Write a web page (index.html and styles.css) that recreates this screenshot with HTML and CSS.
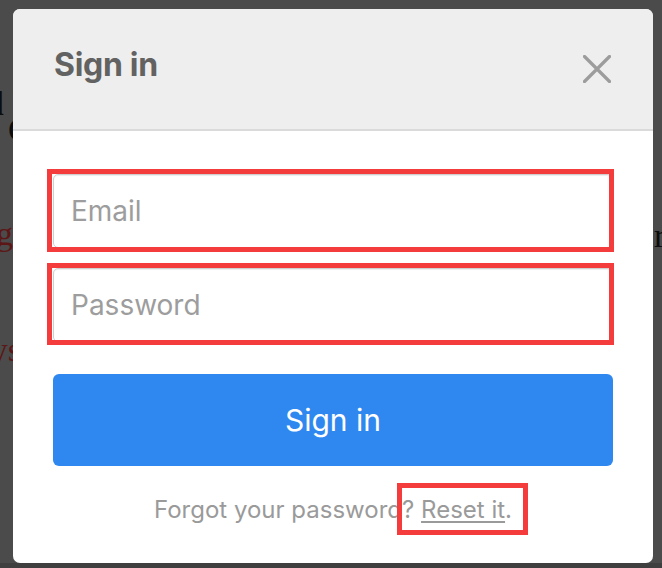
FILE: index.html
```html
<!DOCTYPE html>
<html lang="en">
<head>
<meta charset="utf-8">
<title>Sign in</title>
<link rel="stylesheet" href="styles.css">
</head>
<body>
<div class="page">
  <div class="side side-left">
    <span class="bg-glyph bg-stem">l</span>
    <span class="bg-glyph bg-c">C</span>
    <span class="bg-glyph bg-g">g</span>
    <span class="bg-glyph bg-ys">ys</span>
  </div>
  <div class="modal">
    <div class="modal-header">
      <h2 class="modal-title">Sign in</h2>
      <button class="close" type="button" aria-label="Close">
        <svg width="28" height="28" viewBox="0 0 28 28"><path d="M1.5 1.5 L26.5 26.5 M26.5 1.5 L1.5 26.5" stroke="#9c9c9c" stroke-width="3.2" stroke-linecap="round" fill="none"/></svg>
      </button>
    </div>
    <div class="modal-body">
      <div class="field"><input class="input" type="email" placeholder="Email"><span class="mark"></span></div>
      <div class="field"><input class="input" type="password" placeholder="Password"><span class="mark mark-pw"></span></div>
      <button class="btn" type="button">Sign in</button>
      <p class="forgot">Forgot your password? <span class="reset-wrap"><a class="reset" href="#">Reset it</a>.<span class="mark mark-link"></span></span></p>
    </div>
  </div>
  <div class="side side-right">
    <span class="bg-glyph bg-r">r</span>
  </div>
</div>
</body>
</html>
```

FILE: styles.css
```css
* { box-sizing: border-box; }
html, body { margin: 0; padding: 0; }
body {
  width: 662px;
  height: 568px;
  overflow: hidden;
  background: linear-gradient(#4b4b4b 0, #4b4b4b 563px, #3f3f3f 563px);
  font-family: Inter, "Liberation Sans", Arial, sans-serif;
}
.page {
  display: grid;
  grid-template-columns: 13px 640px 9px;
  padding-top: 9px;
  height: 568px;
}
.side {
  overflow: hidden;
  display: flex;
  flex-direction: column;
  font-family: "Liberation Serif", "Times New Roman", serif;
}
.bg-glyph { display: block; line-height: 1; white-space: nowrap; }
.side-left { align-items: flex-end; }
.bg-stem { color: #0d0d0d; font-size: 34px; font-weight: 700; margin-top: 78px; margin-right: 9px; }
.bg-c { color: #0d0d0d; font-size: 34px; align-self: flex-start; margin-left: 8px; margin-top: -8px; }
.bg-g { color: #5c1616; font-size: 34px; margin-top: 70px; margin-right: 0; }
.bg-ys { color: #5c1616; font-size: 34px; margin-top: 82px; margin-right: -8px; }
.side-right { align-items: flex-start; }
.bg-r { color: #0d0d0d; font-size: 34px; margin-top: 210px; margin-left: 1px; }

.modal {
  background: #fff;
  border-radius: 7px;
  height: 554px;
  overflow: hidden;
  display: flex;
  flex-direction: column;
}
.modal-header {
  height: 122px;
  flex: none;
  background: #eeeeee;
  border-bottom: 2px solid #dadada;
  display: flex;
  align-items: center;
  justify-content: space-between;
  padding: 0 42px 8px 41px;
}
.modal-title {
  margin: 0;
  font-size: 32px;
  font-weight: 700;
  color: #626262;
  line-height: 1;
  letter-spacing: -0.3px;
}
.close {
  border: 0;
  background: none;
  padding: 0;
  width: 28px;
  height: 28px;
  display: flex;
  margin-top: 8px;
}
.modal-body {
  padding: 43px 40px 0;
  display: flex;
  flex-direction: column;
}
.field { position: relative; margin-bottom: 20px; }
.input {
  display: block;
  width: 100%;
  height: 74px;
  border: 1px solid #cfcfcf;
  border-radius: 5px;
  box-shadow: inset 0 1px 1px rgba(0,0,0,0.075);
  padding: 0 17px;
  font-family: inherit;
  font-size: 28px;
  color: #555;
  background: #fff;
  outline: none;
}
.input::placeholder { color: #9d9d9d; }
.mark {
  position: absolute;
  left: -6px;
  right: -1px;
  top: -5px;
  bottom: -4px;
  border: 5px solid #f43c3c;
  pointer-events: none;
}
.mark-pw { bottom: -3px; }
.btn {
  margin-top: 12px;
  height: 92px;
  border: 0;
  border-radius: 6px;
  background: #2f88f0;
  color: #fff;
  font-family: inherit;
  font-size: 30px;
  font-weight: 400;
}
.forgot {
  margin: 29px 0 0;
  text-align: center;
  font-size: 24px;
  color: #9a9a9a;
  line-height: 30px;
}
.reset-wrap { position: relative; }
.reset { color: #9a9a9a; text-decoration: underline; text-underline-offset: 3px; }
.mark-link { left: -24px; right: -16px; top: -12px; bottom: -11px; }
```
